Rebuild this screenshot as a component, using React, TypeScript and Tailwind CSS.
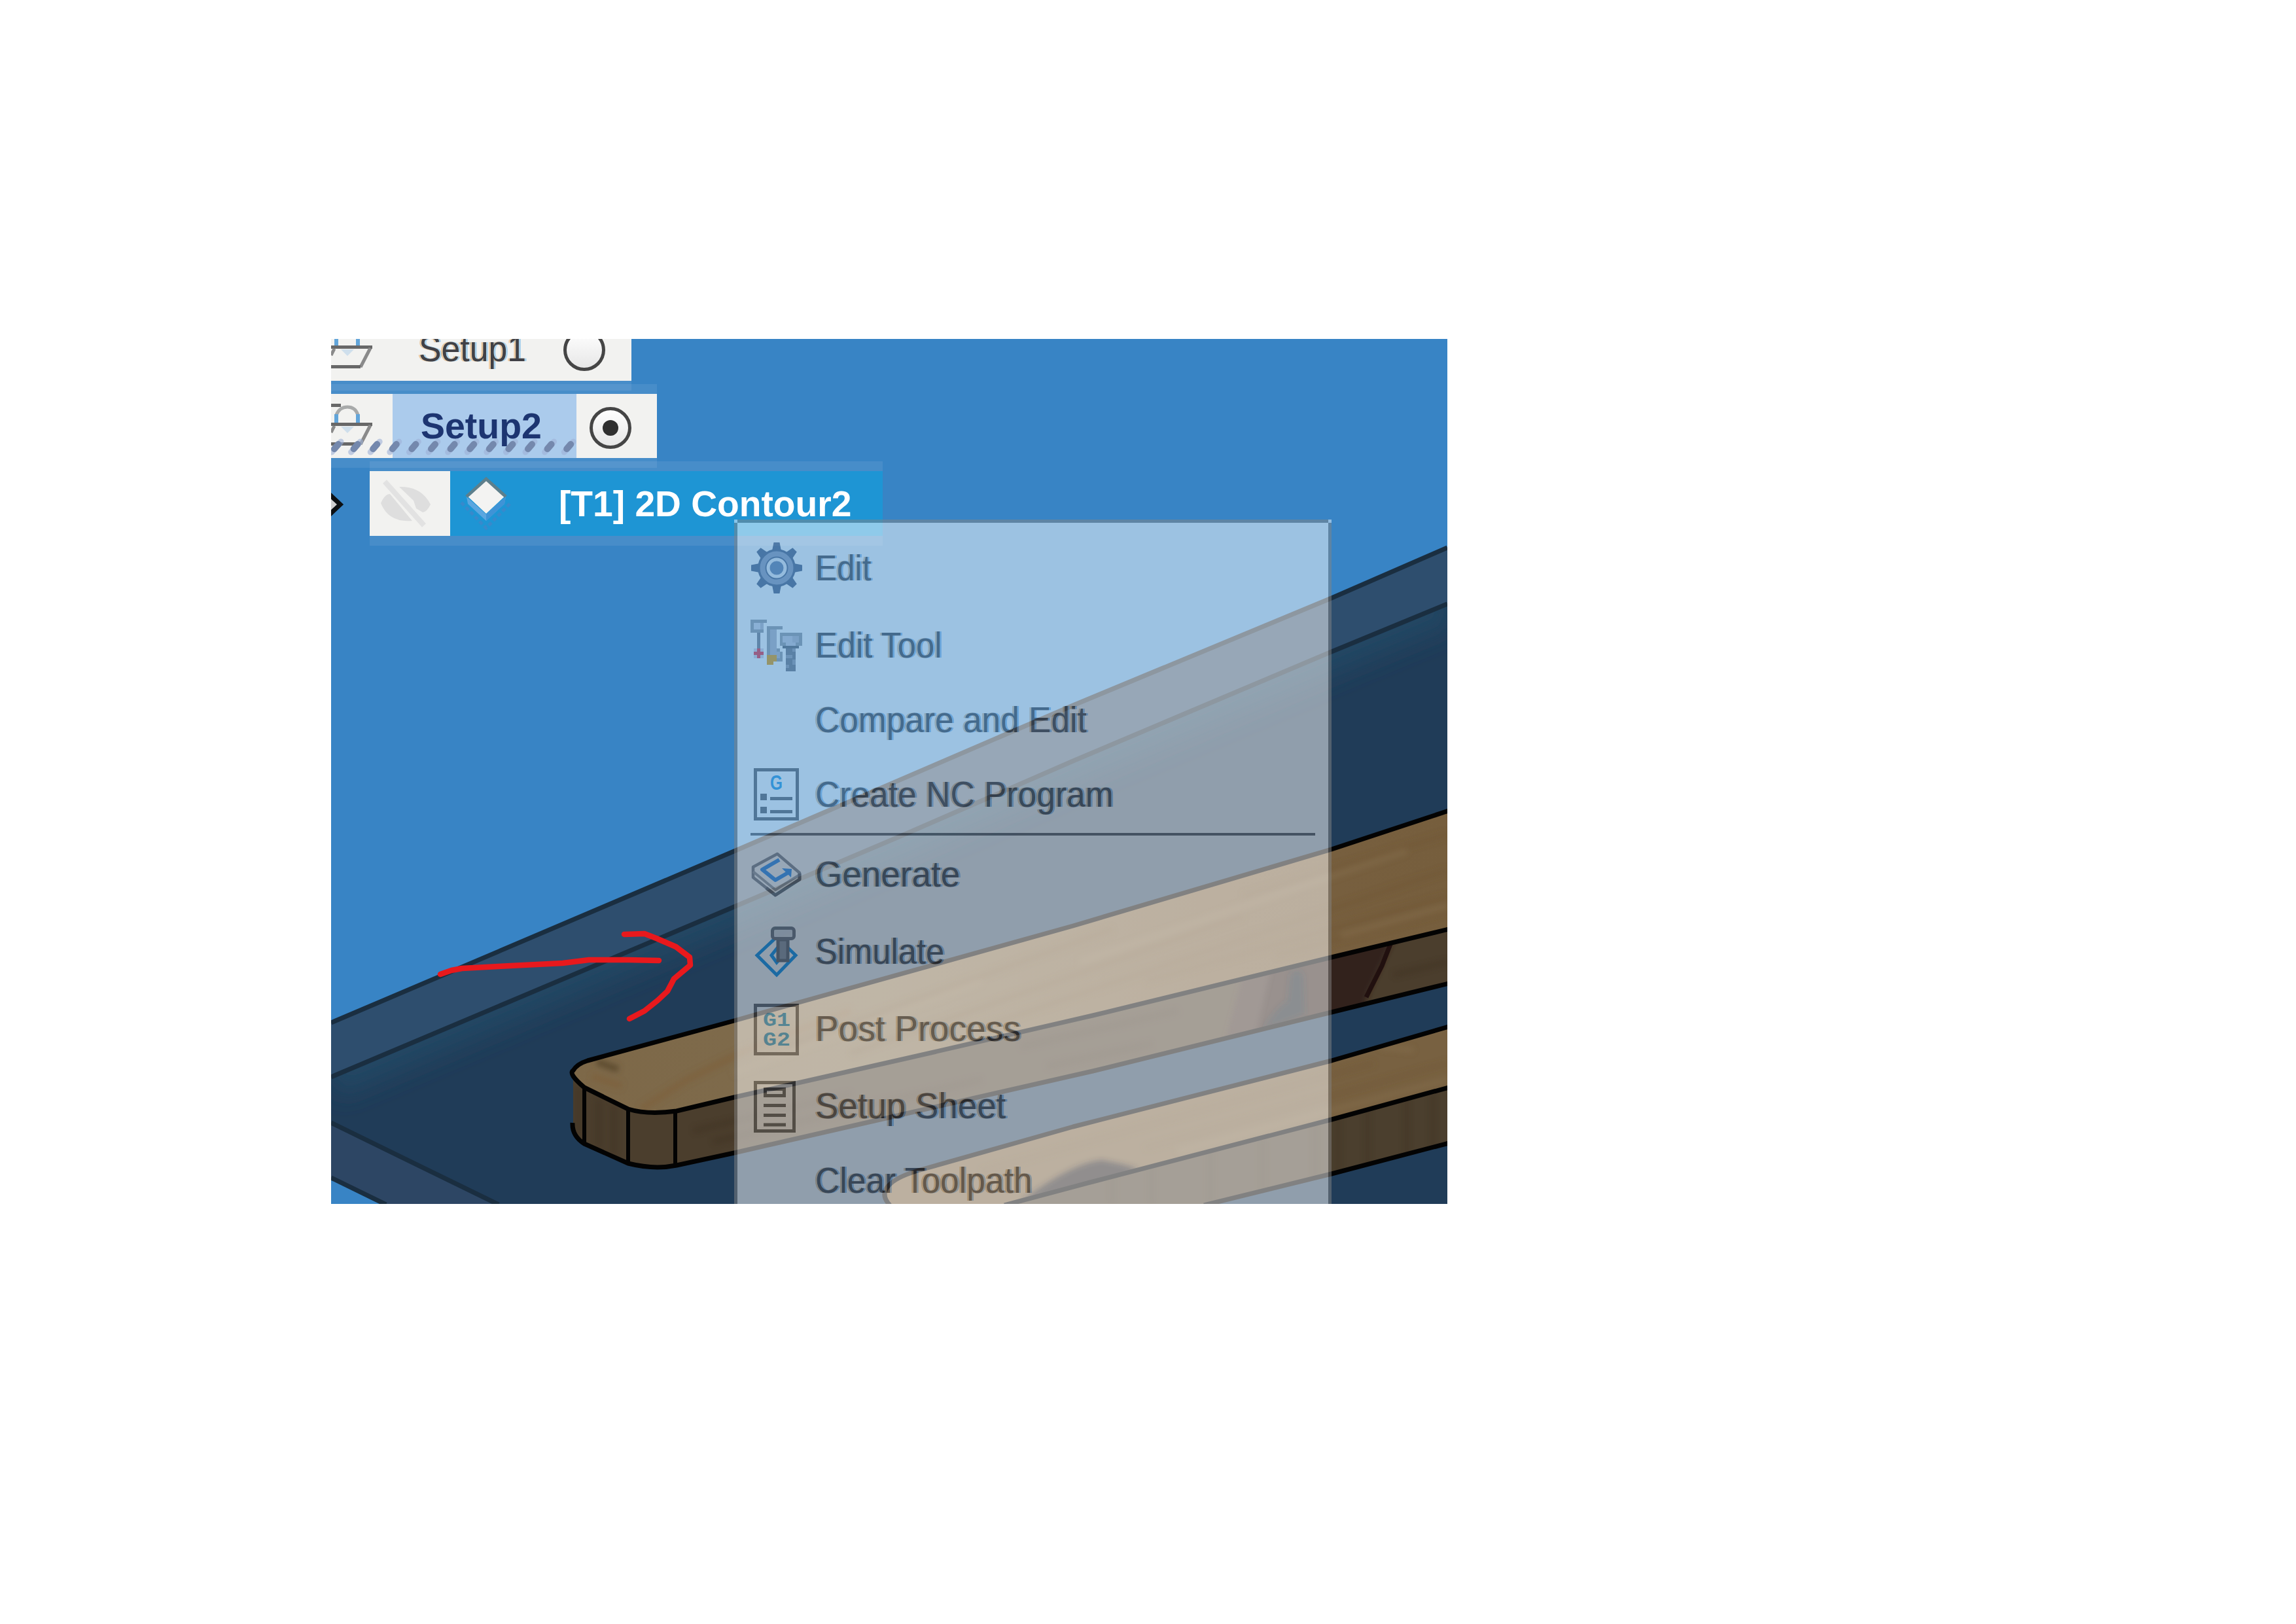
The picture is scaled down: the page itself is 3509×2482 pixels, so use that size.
import React from "react";

const INK = "#68686c";

function Backdrop() {
  const slabTop = "506,1563 1124,1300 1640,1078 2035,914 2212,837";
  const slabInner = "506,1646 1124,1385 1376,1278 1640,1163 2035,996 2212,923";
  const face1 =
    "M898 1621 L1122 1560 L1221 1532 L1640 1415 L2035 1298 L2212 1240 V1420 L2035 1463 L1670 1552 L1392 1616 L1122 1677 L1034 1698 Q990 1704 960 1695 L893 1662 Q868 1641 876 1636 Q882 1626 898 1621 Z";
  const side1 =
    "M876 1642 Q878 1652 893 1662 L960 1695 Q990 1704 1034 1698 L1122 1677 L1392 1616 L1670 1552 L2035 1463 L2212 1420 V1503 L2035 1547 L1670 1637 L1389 1701 L1122 1762 L1034 1781 Q1000 1788 960 1778 L893 1748 Q876 1736 876 1720 Z";
  const face2 =
    "M1360 1842 Q1345 1826 1358 1812 Q1370 1798 1410 1787 L1640 1722 L2035 1621 L2212 1570 V1662 L2035 1711 L1670 1806 L1535 1842 Z";
  const side2 = "M1535 1842 L1670 1806 L2035 1711 L2212 1662 V1747 L2035 1794 L1840 1842 Z";
  return (
    <svg className="absolute inset-0 h-full w-full" viewBox="506 518 1706 1322" preserveAspectRatio="none">
      <defs>
        <clipPath id="inner">
          <polygon points={`${slabInner} 2212,1840 762,1840 506,1717`} />
        </clipPath>
        <clipPath id="f1"><path d={face1} /></clipPath>
        <clipPath id="s1"><path d={side1} /></clipPath>
        <clipPath id="f2"><path d={face2} /></clipPath>
        <clipPath id="s2"><path d={side2} /></clipPath>
        <linearGradient id="wood" x1="0" x2="1">
          <stop offset="0" stopColor="#7d6848" />
          <stop offset="0.35" stopColor="#7f6c4d" />
          <stop offset="0.75" stopColor="#786040" />
          <stop offset="1" stopColor="#765e3d" />
        </linearGradient>
        <filter id="soft"><feGaussianBlur stdDeviation="18" /></filter>
        <filter id="soft2"><feGaussianBlur stdDeviation="4" /></filter>
      </defs>
      <rect x="506" y="518" width="1706" height="1322" fill="#3884c5" />
      <polygon points={`${slabTop} 2212,1840 590,1840 506,1800`} fill="#2e4e6e" />
      <polygon points="506,1717 762,1840 590,1840 506,1800" fill="#2d4664" />
      <polygon points={`${slabInner} 2212,1840 762,1840 506,1717`} fill="#203c58" />
      <g clipPath="url(#inner)">
        <polyline points={slabInner} fill="none" stroke="#234663" strokeWidth="64" filter="url(#soft)" />
      </g>
      <g fill="none" stroke="#1a2e40" strokeWidth="7">
        <polyline points={slabTop} />
        <polyline points={slabInner} />
        <polyline points="506,1716 762,1841" />
        <polyline points="506,1800 590,1841" />
      </g>

      <path d={side1} fill="#4b3e2d" />
      <g clipPath="url(#s1)">
        <polygon points="1935,1470 2130,1435 2090,1520 2084,1545 1905,1590" fill="#32221b" filter="url(#soft2)" />
        <polygon points="1905,1470 1945,1470 1915,1600 1870,1600" fill="#42322a" filter="url(#soft2)" />
        <path d="M1972 1490 Q1985 1475 1992 1492 L1994 1550 L1930 1575 Q1950 1540 1968 1530 Z" fill="#131a20" filter="url(#soft2)" />
        <path d="M2127 1438 L2112 1476 L2088 1524" stroke="#21100f" strokeWidth="7" fill="none" />
        <g stroke="#3f3222" strokeWidth="9" opacity="0.45" fill="none" filter="url(#soft2)">
          <path d="M1060 1728 L1300 1672 M1090 1745 L1500 1650 M1560 1600 L1800 1545 M1600 1630 L1760 1595 M2130 1490 L2212 1470" />
          <path d="M884 1660 V1735 M915 1680 V1755 M938 1690 V1765" />
        </g>
      </g>
      <path d={face1} fill="url(#wood)" />
      <g clipPath="url(#f1)" fill="none">
        <g filter="url(#soft2)" strokeWidth="10">
          <path d="M980 1695 L1050 1650 L1140 1605 L1300 1545 M905 1645 L950 1660" stroke="#7d5f3c" opacity="0.7" />
          <path d="M912 1622 Q930 1630 945 1634" stroke="#5a482e" opacity="0.9" />
          <path d="M1200 1600 L1700 1420 M1300 1610 L1900 1400 M1500 1570 L2212 1330 M1750 1500 L2212 1370 M1950 1460 L2212 1392 M1900 1370 L2212 1275" stroke="#6f5431" opacity="0.35" />
          <path d="M1120 1640 L1500 1500 M1650 1470 L2150 1300 M2050 1430 L2212 1385" stroke="#8b7552" opacity="0.35" />
        </g>
      </g>
      <path d={side2} fill="#4b3f2e" />
      <g clipPath="url(#s2)">
        <path d="M1700 1790 V1840 M1760 1780 V1840 M1850 1750 V1840 M1930 1740 V1830 M2010 1710 V1810 M2045 1700 V1800 M2090 1690 V1790 M2150 1670 V1770 M2190 1670 V1760" stroke="#3e3221" strokeWidth="7" opacity="0.45" filter="url(#soft2)" />
      </g>
      <path d={face2} fill="#786141" />
      <g clipPath="url(#f2)" filter="url(#soft2)">
        <path d="M1560 1836 Q1640 1776 1685 1773 Q1712 1778 1740 1786 L1700 1810 Z" fill="#241a1e" />
        <path d="M1500 1790 L2100 1625 M1750 1755 L2212 1625" stroke="#6f5431" strokeWidth="8" opacity="0.35" fill="none" />
        <path d="M1800 1760 L2212 1650 M2110 1600 L2160 1605" stroke="#88724f" strokeWidth="8" opacity="0.45" fill="none" />
      </g>
      <g fill="none" stroke="#030303" strokeWidth="7" strokeLinejoin="round">
        <path d="M2214 1239 L2035 1298 L1640 1415 L1221 1532 L1122 1560 L898 1621 Q882 1626 876 1636 Q868 1641 893 1662 L960 1695 Q990 1704 1034 1698 L1122 1677 L1392 1616 L1670 1552 L2035 1463 L2214 1420" />
        <path d="M875 1716 Q874 1736 893 1748 L960 1778 Q1000 1788 1034 1781 L1122 1762 L1389 1701 L1670 1637 L2035 1547 L2214 1503" />
        <path d="M893 1662 V1748 M960 1695 V1778 M1032 1698 V1781" strokeWidth="6" />
        <path d="M1360 1842 Q1345 1826 1358 1812 Q1370 1798 1410 1787 L1640 1722 L2035 1621 L2214 1569" />
        <path d="M1535 1842 L1670 1806 L2035 1711 L2214 1662" />
        <path d="M1840 1842 L2035 1794 L2214 1747" />
      </g>

      <g fill="none" stroke="#e8191d" strokeWidth="8.500" strokeLinecap="round" strokeLinejoin="round">
        <path d="M673 1489 L690 1483 L706 1480 L780 1476 L860 1472 L900 1467 L960 1467 L1007 1468" />
        <path d="M954 1428 L985 1427 L1003 1434 L1033 1447 L1054 1463 L1055 1475 L1030 1496 L1020 1515 L1005 1529 L985 1545 L962 1557" />
      </g>
    </svg>
  );
}

function SetupIcon() {
  return (
    <svg className="h-[98px] w-[94px] shrink-0" viewBox="0 0 94 98" fill="none" strokeWidth="5">
      <path d="M8 32 Q13 20 25 20 Q37 20 41 32" stroke="#a8aaaa" />
      <path d="M8 31 V45 M41 31 V45" stroke="#62a5da" strokeWidth="6" />
      <path d="M15 50 H35 L25 60 Z" fill="#cfdfec" />
      <path d="M0 17.500 H15" stroke="#686868" />
      <path d="M0 46.500 H63" stroke="#686868" />
      <path d="M5 49 L0 59 M60 48 L45 77" stroke="#8a8a8a" />
      <path d="M0 76.500 H45" stroke="#686868" />
    </svg>
  );
}

function Radio({ checked = false }: { checked?: boolean }) {
  return (
    <svg className="h-[66px] w-[66px] shrink-0" viewBox="0 0 66 66">
      <defs>
        <linearGradient id="knob" x1="0" y1="0" x2="0" y2="1">
          <stop offset="0" stopColor="#ffffff" />
          <stop offset="1" stopColor="#e6e6e6" />
        </linearGradient>
      </defs>
      <circle cx="33" cy="33" r="29.500" fill="url(#knob)" stroke="#454545" strokeWidth="5" />
      {checked && <circle cx="33" cy="33" r="12" fill="#303030" />}
    </svg>
  );
}

function Hatch() {
  const marks = Array.from({ length: 13 }, (_, i) => 8 + i * 29.6);
  return (
    <svg className="absolute left-0 top-[67px] h-[28px] w-[376px]" viewBox="0 0 376 28">
      {marks.map((x) => (
        <g key={x} strokeLinecap="round">
          <path d={`M${x - 7} 22 L${x + 7} 6`} stroke="#9fb2d8" strokeWidth="9" opacity="0.6" />
          <path d={`M${x - 3} 17 L${x + 3} 10`} stroke="#7488ad" strokeWidth="10" />
        </g>
      ))}
    </svg>
  );
}

function HiddenEye() {
  return (
    <svg className="h-[74px] w-[80px]" viewBox="0 0 80 74">
      <path d="M2 36 Q8 22 16 22 L50 63 Q14 66 2 36 Z" fill="#dedede" />
      <path d="M30 11 Q64 10 78 38 Q72 50 66 50 L56 44 L52 32 Z" fill="#dedede" />
      <path d="M8 3 L68 70" stroke="#e2e2e2" strokeWidth="8" />
    </svg>
  );
}

function OperationIcon() {
  return (
    <svg className="h-[84px] w-[84px]" viewBox="0 0 84 84">
      <path d="M4 40 L42 79 L80 40" fill="none" stroke="#3889cb" strokeWidth="5" strokeDasharray="6 4" />
      <path d="M12 31 L42 58 L72 31 L70 42 L42 68 L14 42 Z" fill="#5ba6e0" />
      <path d="M42 58 V68 L70 42 L72 31 Z" fill="#3f93d6" />
      <path d="M42 4 L71 30 L42 57 L13 30 Z" fill="#f3f3f2" />
      <path d="M12 31 L42 4 L72 31" fill="none" stroke="#5d7f8c" strokeWidth="5" />
    </svg>
  );
}

function GearIcon() {
  return (
    <svg className="h-20 w-20" viewBox="0 0 80 80">
      <g fill="#586887">
        {[0, 45, 90, 135, 180, 225, 270, 315].map((a) => (
          <path key={a} d="M33 14 L35.500 1 H44.500 L47 14 Z" transform={`rotate(${a} 40 40)`} />
        ))}
        <circle cx="40" cy="40" r="29" />
      </g>
      <circle cx="40" cy="40" r="21.500" fill="none" stroke="#98a2bc" strokeWidth="8" />
      <circle cx="40" cy="40" r="13" fill="#6e86ac" stroke="#f0f1f6" strokeWidth="5" />
    </svg>
  );
}

function EditToolIcon() {
  return (
    <svg className="h-20 w-20" viewBox="0 0 80 80" shapeRendering="crispEdges">
      <path d="M0 1 H25 V6 H20 V21 H0 Z" fill="#9ea2a8" />
      <path d="M5 6 H15 V16 H5 Z" fill="#dcdce6" />
      <path d="M5 16 H15 V6 H20 V16 H5 Z" fill="#c0c0cc" />
      <path d="M10 21 H15 V45 H10 Z" fill="#84868f" />
      <path d="M5 45 H20 V60 H5 Z" fill="#e0d8e4" />
      <path d="M10 45 H15 V50 H20 V55 H15 V60 H10 V55 H5 V50 H10 Z" fill="#f43a49" />
      <path d="M25 11 H49 V16 H40 V45 H45 V50 H49 V65 H40 V60 H25 Z" fill="#9ea2a8" />
      <path d="M30 16 H40 V50 H45 V60 H30 Z" fill="#bcbcc8" />
      <path d="M25 55 H40 V65 H35 V70 H25 Z" fill="#f0a410" />
      <path d="M45 21 H79 V41 H45 Z" fill="#9ea2a8" />
      <path d="M49 26 H74 V36 H69 V41 H54 V36 H49 Z" fill="#d0d0dc" />
      <path d="M64 26 H74 V36 H64 Z" fill="#bcbcc8" />
      <path d="M49 41 H74 V45 H49 Z" fill="#686c74" />
      <path d="M54 45 H69 V80 H54 Z" fill="#7c7e88" />
      <path d="M64 45 H69 V50 H64 Z M54 55 H64 V60 H54 Z M54 70 H59 V75 H54 Z M64 62 H69 V70 H64 Z" fill="#9ea0ac" />
    </svg>
  );
}

function NcProgramIcon() {
  return (
    <svg className="h-20 w-20" viewBox="0 0 80 80">
      <rect x="7.500" y="2.500" width="64" height="75" fill="none" stroke={INK} strokeWidth="5" />
      <text x="30" y="33" fontFamily="Liberation Sans" fontWeight="700" fontSize="31" fill="#2f9fe8" textLength="19" lengthAdjust="spacingAndGlyphs">G</text>
      <path d="M15 39 H25 V49 H15 Z M30 44 H64 V49 H30 Z M15 59 H25 V69 H15 Z M30 64 H64 V69 H30 Z" fill={INK} />
    </svg>
  );
}

function GenerateIcon() {
  return (
    <svg className="h-20 w-20" viewBox="0 0 80 80" fill="none" strokeLinejoin="round">
      <path d="M41 9 L75 38 V48 L38 72 L4 45 V29 Z" stroke="#8a8d95" strokeWidth="4.500" />
      <path d="M4 36 L38 64 L75 41" stroke="#a2a5ac" strokeWidth="4" />
      <path d="M75 39 V48 L38 72 L24 61" stroke="#6a6d74" strokeWidth="5" />
      <path d="M44 18 L18 33 L38 49 L57 38" stroke="#3a98f6" strokeWidth="6" />
      <path d="M48 31 L63 32 L62 45 Z" fill="#3a98f6" />
    </svg>
  );
}

function SimulateIcon() {
  return (
    <svg className="h-20 w-20 overflow-visible" viewBox="0 0 80 80">
      <path d="M40 18 L69 46 L40 76 L10 46 Z" fill="none" stroke="#1797ee" strokeWidth="5" />
      <path d="M40 36 L50 46 L40 57 L32 46 Z" fill="none" stroke="#1797ee" strokeWidth="5" />
      <rect x="42" y="22" width="15" height="32" fill="#9498a0" stroke="#6a6c72" strokeWidth="5" />
      <rect x="33.500" y="4.500" width="33" height="16" rx="4" fill="#dcdee2" stroke="#74777e" strokeWidth="5" />
    </svg>
  );
}

function PostIcon() {
  return (
    <svg className="h-20 w-20 overflow-visible" viewBox="0 0 80 80">
      <rect x="7.500" y="4.500" width="64" height="74" fill="none" stroke={INK} strokeWidth="5" />
      <g fontFamily="Liberation Mono" fontWeight="700" fontSize="30" fill="#2f9fdc">
        <text x="19" y="36" textLength="42" lengthAdjust="spacingAndGlyphs">G1</text>
        <text x="19" y="66" textLength="42" lengthAdjust="spacingAndGlyphs">G2</text>
      </g>
    </svg>
  );
}

function SheetIcon() {
  return (
    <svg className="h-20 w-20 overflow-visible" viewBox="0 0 80 80" fill="none" stroke="#5f6062" strokeWidth="5">
      <rect x="7.500" y="4.500" width="59" height="74" />
      <rect x="22.500" y="14.500" width="29" height="10" />
      <path d="M20 39.500 H54 M20 54.500 H54 M20 69 H54" />
    </svg>
  );
}

type Item = { label: string; stretch: string; icon?: React.ReactNode };

const editItems: Item[] = [
  { label: "Edit", stretch: "scale-x-[0.885]", icon: <GearIcon /> },
  { label: "Edit Tool", stretch: "scale-x-[0.905]", icon: <EditToolIcon /> },
  { label: "Compare and Edit", stretch: "scale-x-[0.919]" },
  { label: "Create NC Program", stretch: "scale-x-[0.921]", icon: <NcProgramIcon /> },
];

const toolpathItems: Item[] = [
  { label: "Generate", stretch: "scale-x-[0.948]", icon: <GenerateIcon /> },
  { label: "Simulate", stretch: "scale-x-[0.905]", icon: <SimulateIcon /> },
  { label: "Post Process", stretch: "scale-x-[0.952]", icon: <PostIcon /> },
  { label: "Setup Sheet", stretch: "scale-x-[0.945]", icon: <SheetIcon /> },
  { label: "Clear Toolpath", stretch: "scale-x-[0.921]" },
];

function MenuItem({ label, stretch, icon }: Item) {
  return (
    <div className={`flex shrink-0 items-center gap-[19px] pl-5 ${icon ? "h-[118px]" : "h-[110px]"}`}>
      <span className="h-20 w-20 shrink-0">{icon}</span>
      <span
        className={`origin-left whitespace-nowrap text-[56px] leading-none text-[#505056] [text-shadow:-3px_0_rgba(205,140,60,0.45),3px_0_rgba(30,130,230,0.45)] ${stretch}`}
      >
        {label}
      </span>
    </div>
  );
}

function ContextMenu() {
  return (
    <div className="absolute left-[616px] top-[276px] flex h-[1100px] w-[913px] flex-col border-[5px] border-[#848484] bg-white pt-[10px] opacity-50">
      <i className="absolute -left-[5px] -top-[5px] h-[5px] w-[5px] bg-[#eef6ff]" />
      <i className="absolute -right-[5px] -top-[5px] h-[5px] w-[5px] bg-[#eef6ff]" />
      {editItems.map((item) => (
        <MenuItem key={item.label} {...item} />
      ))}
      <hr className="ml-5 h-[4px] w-[863px] shrink-0 border-0 bg-[#68686c]" />
      {toolpathItems.map((item) => (
        <MenuItem key={item.label} {...item} />
      ))}
    </div>
  );
}

const halo = "shadow-[0_15px_0_rgba(255,255,255,0.08),0_-15px_0_rgba(255,255,255,0.08)]";

export default function App() {
  return (
    <main className="h-[2482px] w-[3509px] overflow-hidden bg-white pl-[506px] pt-[518px] font-['Liberation_Sans',Arial,sans-serif]">
      <section className="relative h-[1322px] w-[1706px] overflow-hidden">
        <Backdrop />
        <div className="relative -mt-[34px] flex flex-col items-start gap-5">
          <div className={`flex h-[98px] w-[459px] items-center bg-[#f2f2f0] ${halo}`}>
            <SetupIcon />
            <span className="ml-[40px] w-[220px] origin-left scale-x-[0.925] text-[56px] leading-none text-[#404046] [text-shadow:-3px_0_rgba(225,140,40,0.4),3px_0_rgba(60,160,230,0.4)]">
              Setup1
            </span>
            <span className="mt-[4px]">
              <Radio />
            </span>
          </div>

          <div className={`relative flex h-[98px] w-[498px] items-center bg-[#f2f2f0] ${halo}`}>
            <SetupIcon />
            <div className="flex h-full w-[281px] items-center bg-[#abcbec] pl-[43px]">
              <span className="origin-left scale-x-[0.99] text-[56px] font-bold leading-none text-[#1d3571]">Setup2</span>
            </div>
            <Hatch />
            <div className="mt-[6px] flex flex-1 justify-center pr-[19px]">
              <Radio checked />
            </div>
          </div>

          <div className="flex h-[99px] items-center">
            <svg className="h-[40px] w-[59px]" viewBox="0 0 59 40">
              <path d="M-3 5 L14 21 L-3 37" fill="#cfcfcf" stroke="#0c0f12" strokeWidth="7" />
            </svg>
            <div className={`flex h-full w-[784px] ${halo}`}>
              <div className="flex h-full w-[123px] items-center justify-center bg-[#f2f2f0] pr-[14px]">
                <HiddenEye />
              </div>
              <div className="flex h-full flex-1 items-center bg-[#1e95d4] pl-[13px]">
                <OperationIcon />
                <span className="ml-[69px] origin-left scale-x-[0.985] whitespace-nowrap text-[56px] font-bold leading-none text-white">
                  [T1] 2D Contour2
                </span>
              </div>
            </div>
          </div>
        </div>
        <ContextMenu />
      </section>
    </main>
  );
}
